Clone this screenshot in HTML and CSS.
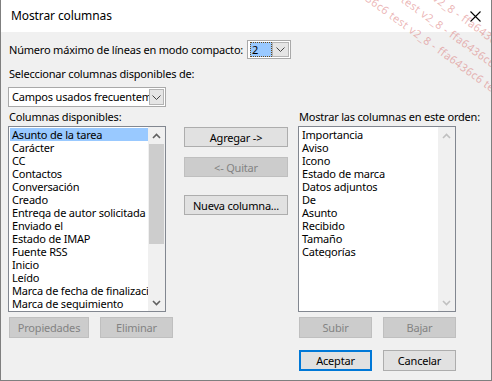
FILE: index.html
```html
<!DOCTYPE html>
<html lang="es">
<head>
<meta charset="utf-8">
<title>Mostrar columnas</title>
<link rel="stylesheet" href="styles.css">
</head>
<body>
<div class="dialog">
  <div class="titlebar">
    <span class="title">Mostrar columnas</span>
    <svg class="close" width="11" height="11" viewBox="0 0 11 11"><path d="M0.5 0.5 L10.5 10.5 M10.5 0.5 L0.5 10.5" stroke="#000" stroke-width="1.1" fill="none"/></svg>
  </div>
  <div class="content">
    <div class="row-compact">
      <span class="lbl">Número máximo de líneas en modo compacto:</span>
      <div class="combo combo-small">
        <span class="combo-val"><span class="sel-val">2</span></span>
        <span class="dd"><svg width="9" height="5" viewBox="0 0 9 5"><path d="M0.5 0.5 L4.5 4.5 L8.5 0.5" stroke="#444" fill="none"/></svg></span>
      </div>
    </div>
    <div class="lbl lbl-select">Seleccionar columnas disponibles de:</div>
    <div class="combo combo-wide">
      <span class="combo-val">Campos usados frecuentemente</span>
      <span class="dd"><svg width="9" height="5" viewBox="0 0 9 5"><path d="M0.5 0.5 L4.5 4.5 L8.5 0.5" stroke="#444" fill="none"/></svg></span>
    </div>
    <div class="cols">
      <div class="col">
        <div class="lbl lbl-list">Columnas disponibles:</div>
        <div class="list">
          <ul class="items">
            <li class="selected">Asunto de la tarea</li>
            <li>Carácter</li>
            <li>CC</li>
            <li>Contactos</li>
            <li>Conversación</li>
            <li>Creado</li>
            <li>Entrega de autor solicitada</li>
            <li>Enviado el</li>
            <li>Estado de IMAP</li>
            <li>Fuente RSS</li>
            <li>Inicio</li>
            <li>Leído</li>
            <li>Marca de fecha de finalización</li>
            <li>Marca de seguimiento</li>
          </ul>
          <div class="sbar">
            <span class="arrow"><svg width="9" height="6" viewBox="0 0 9 6"><path d="M1 5 L4.5 1.5 L8 5" stroke="#606060" stroke-width="1.6" fill="none"/></svg></span>
            <span class="track"><span class="thumb"></span></span>
            <span class="arrow"><svg width="9" height="6" viewBox="0 0 9 6"><path d="M1 1 L4.5 4.5 L8 1" stroke="#606060" stroke-width="1.6" fill="none"/></svg></span>
          </div>
        </div>
        <div class="btnrow">
          <button class="btn disabled w80">Propiedades</button>
          <button class="btn disabled w73">Eliminar</button>
        </div>
      </div>
      <div class="mid">
        <button class="btn mbtn">Agregar -&gt;</button>
        <button class="btn mbtn disabled">&lt;- Quitar</button>
        <button class="btn mbtn nueva">Nueva columna...</button>
      </div>
      <div class="col">
        <div class="lbl lbl-list">Mostrar las columnas en este orden:</div>
        <div class="list">
          <ul class="items">
            <li>Importancia</li>
            <li>Aviso</li>
            <li>Icono</li>
            <li>Estado de marca</li>
            <li>Datos adjuntos</li>
            <li>De</li>
            <li>Asunto</li>
            <li>Recibido</li>
            <li>Tamaño</li>
            <li>Categorías</li>
          </ul>
          <div class="sbar sbar-off">
            <span class="arrow"><svg width="9" height="6" viewBox="0 0 9 6"><path d="M1 5 L4.5 1.5 L8 5" stroke="#c0c0c0" stroke-width="1.6" fill="none"/></svg></span>
            <span class="track"></span>
            <span class="arrow"><svg width="9" height="6" viewBox="0 0 9 6"><path d="M1 1 L4.5 4.5 L8 1" stroke="#c0c0c0" stroke-width="1.6" fill="none"/></svg></span>
          </div>
        </div>
        <div class="btnrow">
          <button class="btn disabled w73">Subir</button>
          <button class="btn disabled w73">Bajar</button>
        </div>
        <div class="btnrow okrow">
          <button class="btn default w73">Aceptar</button>
          <button class="btn w73">Cancelar</button>
        </div>
      </div>
    </div>
  </div>
  <div class="watermark">
    <span class="wm wm1">ffa6436c6 test v2_8 - ffa6436c6 test v2_8 - ffa6436c6</span>
    <span class="wm wm2">ffa6436c6 test v2_8 - ffa6436c6 test v2_8 - ffa6436c6</span>
    <span class="wm wm3">ffa6436c6 test v2_8 - ffa6436c6 test v2_8 - ffa6436c6</span>
  </div>
</div>
</body>
</html>
```

FILE: styles.css
```css
* { box-sizing: border-box; }
html, body { margin: 0; padding: 0; background: #f0f0f0; }
body {
  font-family: "Noto Sans", "DejaVu Sans", sans-serif;
  font-size: 11px;
  letter-spacing: -0.2px;
  color: #000;
}
.dialog {
  position: relative;
  width: 492px;
  height: 381px;
  border: 1px solid #7f7f7f;
  border-top: none;
  background: #f0f0f0;
  overflow: hidden;
}
.titlebar {
  height: 32px;
  background: #fff;
  display: flex;
  align-items: center;
  justify-content: space-between;
  padding: 0 10px 0 10px;
}
.title { font-size: 12px; letter-spacing: -0.1px; padding-bottom: 1px; }
.close { margin-top: 1px; }
.content { padding: 7px 0 0 7px; }
.lbl { line-height: 15px; white-space: nowrap; }
.row-compact { display: flex; align-items: center; gap: 4px; height: 20px; }
.row-compact .lbl { padding-left: 1px; }
.combo {
  display: flex;
  background: #fff;
  border: 1px solid #a9a9a9;
  height: 20px;
  padding: 1px;
}
.combo-small { width: 44px; height: 19px; }
.combo-val { flex: 1; overflow: hidden; white-space: nowrap; line-height: 15px; }
.sel-val {
  display: block;
  background: #99c9ff;
  outline: 1px dotted #6b4a1a;
  outline-offset: -1px;
  padding-left: 2px;
  height: 15px;
  margin-left: 1px;
}
.dd {
  width: 17px;
  background: #e5e5e5;
  border: 1px solid #b4b4b4;
  display: flex;
  align-items: center;
  justify-content: center;
}
.combo-wide { width: 158px; margin-top: 6px; padding: 1px 1px 1px 3px; }
.combo-wide .combo-val { line-height: 16px; }
.combo-wide .dd { width: 15px; }
.lbl-select { margin-top: 7px; padding-left: 1px; }
.cols { display: flex; margin-top: 2px; }
.col { width: 158px; flex-shrink: 0; }
.lbl-list { padding-left: 1px; height: 17px; line-height: 15px; }
.list {
  height: 186px;
  border: 1px solid #828790;
  background: #fff;
  display: flex;
  padding: 1px 0 0 1px;
}
.items {
  list-style: none;
  margin: 0;
  padding: 0;
  flex: 1;
  overflow: hidden;
}
.items li {
  height: 13px;
  line-height: 13px;
  padding-left: 2px;
  white-space: nowrap;
  overflow: hidden;
}
.items li.selected { background: #99c9ff; }
.sbar {
  width: 17px;
  margin-top: -1px;
  background: #f0f0f0;
  display: flex;
  flex-direction: column;
}
.arrow { height: 17px; display: flex; align-items: center; justify-content: center; }
.track { flex: 1; padding: 0 1px; }
.thumb { display: block; height: 100px; background: #cdcdcd; }
.btnrow { display: flex; gap: 11px; margin-top: 5px; padding-left: 1px; }
.okrow { margin-top: 12px; }
.btn {
  font-family: inherit;
  font-size: 11px;
  letter-spacing: -0.2px;
  color: #000;
  background: #e1e1e1;
  border: 1px solid #adadad;
  height: 21px;
  padding: 0;
  margin: 0;
  line-height: 17px;
  flex-shrink: 0;
}
.btn.disabled { background: #cccccc; border-color: #bfbfbf; color: #838383; }
.btn.default { border: 2px solid #0078d7; }
.w80 { width: 80px; }
.w73 { width: 73px; }
.mid {
  width: 104px;
  flex-shrink: 0;
  margin: 18px 10px 0 18px;
  display: flex;
  flex-direction: column;
  gap: 10px;
}
.mbtn { height: 20px; width: 104px; }
.mbtn.nueva { margin-top: 8px; }
.watermark { position: absolute; inset: 0; pointer-events: none; }
.wm {
  position: absolute;
  white-space: nowrap;
  font-size: 11px;
  letter-spacing: 0.4px;
  color: rgba(215, 110, 110, 0.5);
  transform-origin: 0 0;
  transform: rotate(36deg);
}
.wm1 { left: 372px; top: -58px; }
.wm2 { left: 360px; top: -42px; }
.wm3 { left: 348px; top: -26px; }
```
